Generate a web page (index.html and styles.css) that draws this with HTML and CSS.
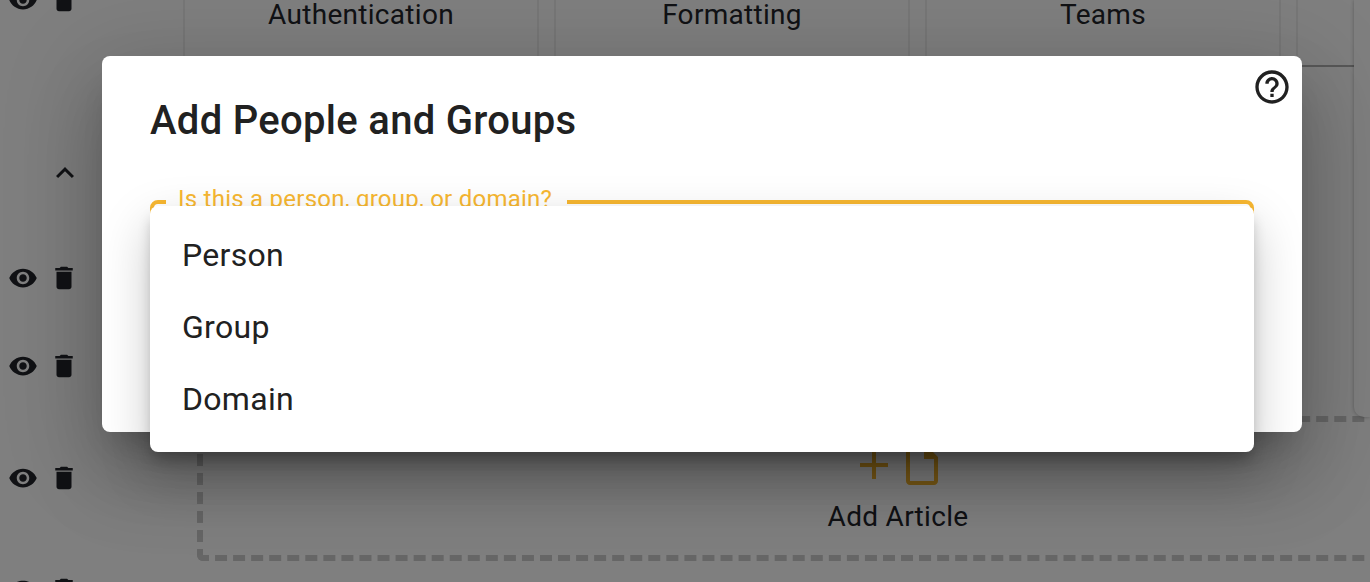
FILE: index.html
```html
<!DOCTYPE html>
<html lang="en">
<head>
<meta charset="utf-8">
<title>Add People and Groups</title>
<link rel="stylesheet" href="styles.css">
</head>
<body>
<div class="page">
  <aside class="rail">
    <div class="actions a0">
      <svg class="icon" viewBox="0 0 24 24"><path d="M12 4.5C7 4.5 2.73 7.61 1 12c1.73 4.39 6 7.5 11 7.5s9.27-3.11 11-7.5c-1.73-4.39-6-7.5-11-7.5zM12 17c-2.76 0-5-2.24-5-5s2.24-5 5-5 5 2.24 5 5-2.24 5-5 5zm0-8c-1.66 0-3 1.34-3 3s1.34 3 3 3 3-1.34 3-3-1.34-3-3-3z"/></svg>
      <svg class="icon" viewBox="0 0 24 24"><path d="M6 19c0 1.1.9 2 2 2h8c1.1 0 2-.9 2-2V7H6v12zM19 4h-3.5l-1-1h-5l-1 1H5v2h14V4z"/></svg>
    </div>
    <div class="chevron">
      <svg class="icon chevron-icon" viewBox="0 0 24 24"><path d="M12 8l-6 6 1.41 1.41L12 10.83l4.59 4.58L18 14z"/></svg>
    </div>
    <div class="actions a1">
      <svg class="icon" viewBox="0 0 24 24"><path d="M12 4.5C7 4.5 2.73 7.61 1 12c1.73 4.39 6 7.5 11 7.5s9.27-3.11 11-7.5c-1.73-4.39-6-7.5-11-7.5zM12 17c-2.76 0-5-2.24-5-5s2.24-5 5-5 5 2.24 5 5-2.24 5-5 5zm0-8c-1.66 0-3 1.34-3 3s1.34 3 3 3 3-1.34 3-3-1.34-3-3-3z"/></svg>
      <svg class="icon" viewBox="0 0 24 24"><path d="M6 19c0 1.1.9 2 2 2h8c1.1 0 2-.9 2-2V7H6v12zM19 4h-3.5l-1-1h-5l-1 1H5v2h14V4z"/></svg>
    </div>
    <div class="actions a2">
      <svg class="icon" viewBox="0 0 24 24"><path d="M12 4.5C7 4.5 2.73 7.61 1 12c1.73 4.39 6 7.5 11 7.5s9.27-3.11 11-7.5c-1.73-4.39-6-7.5-11-7.5zM12 17c-2.76 0-5-2.24-5-5s2.24-5 5-5 5 2.24 5 5-2.24 5-5 5zm0-8c-1.66 0-3 1.34-3 3s1.34 3 3 3 3-1.34 3-3-1.34-3-3-3z"/></svg>
      <svg class="icon" viewBox="0 0 24 24"><path d="M6 19c0 1.1.9 2 2 2h8c1.1 0 2-.9 2-2V7H6v12zM19 4h-3.5l-1-1h-5l-1 1H5v2h14V4z"/></svg>
    </div>
    <div class="actions a3">
      <svg class="icon" viewBox="0 0 24 24"><path d="M12 4.5C7 4.5 2.73 7.61 1 12c1.73 4.39 6 7.5 11 7.5s9.27-3.11 11-7.5c-1.73-4.39-6-7.5-11-7.5zM12 17c-2.76 0-5-2.24-5-5s2.24-5 5-5 5 2.24 5 5-2.24 5-5 5zm0-8c-1.66 0-3 1.34-3 3s1.34 3 3 3 3-1.34 3-3-1.34-3-3-3z"/></svg>
      <svg class="icon" viewBox="0 0 24 24"><path d="M6 19c0 1.1.9 2 2 2h8c1.1 0 2-.9 2-2V7H6v12zM19 4h-3.5l-1-1h-5l-1 1H5v2h14V4z"/></svg>
    </div>
    <div class="actions a4">
      <svg class="icon" viewBox="0 0 24 24"><path d="M12 4.5C7 4.5 2.73 7.61 1 12c1.73 4.39 6 7.5 11 7.5s9.27-3.11 11-7.5c-1.73-4.39-6-7.5-11-7.5zM12 17c-2.76 0-5-2.24-5-5s2.24-5 5-5 5 2.24 5 5-2.24 5-5 5zm0-8c-1.66 0-3 1.34-3 3s1.34 3 3 3 3-1.34 3-3-1.34-3-3-3z"/></svg>
      <svg class="icon" viewBox="0 0 24 24"><path d="M6 19c0 1.1.9 2 2 2h8c1.1 0 2-.9 2-2V7H6v12zM19 4h-3.5l-1-1h-5l-1 1H5v2h14V4z"/></svg>
    </div>
  </aside>
  <main class="main">
    <div class="tiles">
      <div class="tile">Authentication</div>
      <div class="tile">Formatting</div>
      <div class="tile">Teams</div>
      <div class="tile tile-last"></div>
    </div>
    <div class="add-box">
      <div class="add-icons">
        <svg class="add-icon" viewBox="0 0 24 24"><path d="M19 13h-6v6h-2v-6H5v-2h6V5h2v6h6v2z"/></svg>
        <svg class="add-icon" viewBox="0 0 24 24"><path d="M14 2H6c-1.100 0-2 .9-2 2v16c0 1.100.9 2 2 2h12c1.100 0 2-.9 2-2V8l-6-6zM6 20V4h7v5h5v11H6z"/></svg>
      </div>
      <div class="add-label">Add Article</div>
    </div>
  </main>
  <div class="side"></div>
</div>

<div class="overlay"></div>

<section class="dialog">
  <h1 class="title">Add People and Groups</h1>
  <div class="field">
    <span class="legend">Is this a person, group, or domain?</span>
  </div>
  <svg class="help" viewBox="0 0 24 24"><path d="M11 18h2v-2h-2v2zm1-16C6.480 2 2 6.480 2 12s4.480 10 10 10 10-4.480 10-10S17.520 2 12 2zm0 18c-4.410 0-8-3.590-8-8s3.590-8 8-8 8 3.590 8 8-3.590 8-8 8zm0-14c-2.210 0-4 1.790-4 4h2c0-1.100.9-2 2-2s2 .9 2 2c0 2-3 1.750-3 5h2c0-2.250 3-2.500 3-5 0-2.210-1.790-4-4-4z"/></svg>
</section>

<ul class="menu">
  <li class="menu-item">Person</li>
  <li class="menu-item">Group</li>
  <li class="menu-item">Domain</li>
</ul>
</body>
</html>
```

FILE: styles.css
```css
* { box-sizing: border-box; }

html, body {
  margin: 0;
  height: 582px;
  overflow: hidden;
  background: #fff;
  font-family: Roboto, "Liberation Sans", sans-serif;
  color: #212121;
}

.page {
  display: flex;
  height: 582px;
  overflow: hidden;
}

.rail {
  flex: 0 0 183px;
  display: flex;
  flex-direction: column;
  margin-top: -24px;
}

.icon {
  display: block;
  flex: none;
  width: 30px;
  height: 30px;
  fill: #23252b;
}

.actions {
  display: flex;
  flex: none;
  align-items: center;
  gap: 11px;
  padding-left: 8px;
  height: 30px;
}

.a0 { margin-top: 9px; }
.a1 { margin-top: 72px; }
.a2 { margin-top: 58px; }
.a3 { margin-top: 82px; }
.a4 { margin-top: 82px; }

.chevron {
  flex: none;
  margin-top: 140px;
  padding-left: 47px;
  height: 36px;
}

.chevron-icon {
  width: 36px;
  height: 36px;
}

.main {
  flex: 1 1 auto;
  min-width: 0;
  display: flex;
  flex-direction: column;
}

.tiles {
  display: flex;
  gap: 15px;
  height: 67px;
  flex: none;
}

.tile {
  flex: 0 0 356px;
  display: flex;
  justify-content: center;
  font-size: 28px;
  line-height: 29px;
  letter-spacing: 0.3px;
  color: #23252b;
  background: #fff;
  border-left: 2px solid #eeeeee;
  border-right: 2px solid #eeeeee;
  border-bottom: 2px solid #b0b0b0;
}

.tile-last {
  flex-basis: 120px;
  border-right: 0;
}

.add-box {
  flex: none;
  width: 1402px;
  height: 145px;
  margin: 349px 0 0 14px;
  border: 6px dashed #cccccc;
  border-radius: 6px;
  display: flex;
  flex-direction: column;
  align-items: center;
}

.add-icons {
  display: flex;
  margin-top: 19px;
  color: #f5b52e;
}

.add-icon {
  display: block;
  width: 48px;
  height: 48px;
  fill: currentColor;
}

.add-label {
  margin-top: 12px;
  font-size: 28px;
  line-height: 32px;
  letter-spacing: 0.3px;
  color: #23252b;
}

.side {
  flex: 0 0 16px;
  height: 417px;
  background: #fff;
  border-bottom-left-radius: 10px;
  box-shadow: 0 0 4px rgba(0, 0, 0, 0.3);
}

.overlay {
  position: absolute;
  inset: 0;
  background: rgba(0, 0, 0, 0.5);
}

.dialog {
  position: absolute;
  left: 102px;
  top: 56px;
  width: 1200px;
  height: 376px;
  padding: 41px 48px 0;
  background: #fff;
  border-radius: 8px;
  box-shadow: 0 22px 30px -14px rgba(0, 0, 0, 0.2), 0 48px 76px 6px rgba(0, 0, 0, 0.14), 0 18px 92px 16px rgba(0, 0, 0, 0.14);
}

.title {
  margin: 0;
  font-size: 40px;
  font-weight: 500;
  line-height: 48px;
  letter-spacing: 0.3px;
  color: #212121;
}

.field {
  position: relative;
  margin-top: 55px;
  height: 112px;
  border: 4px solid #f7b731;
  border-radius: 8px;
}

.legend {
  position: absolute;
  left: 12px;
  top: -23px;
  padding: 0 15px 0 12px;
  background: #fff;
  font-size: 24px;
  line-height: 36px;
  letter-spacing: 0.25px;
  color: #f7b731;
  white-space: nowrap;
}

.help {
  position: absolute;
  right: 10px;
  top: 11px;
  width: 40px;
  height: 40px;
  fill: #212121;
}

.menu {
  position: absolute;
  left: 150px;
  top: 206px;
  width: 1104px;
  height: 246px;
  margin: 0;
  padding: 13px 0 17px;
  list-style: none;
  background: #fff;
  border-radius: 8px;
  box-shadow: 0 10px 14px -2px rgba(0, 0, 0, 0.22), 0 20px 50px 0 rgba(0, 0, 0, 0.22);
}

.menu-item {
  height: 72px;
  padding-left: 32px;
  display: flex;
  align-items: center;
  font-size: 32px;
  letter-spacing: 0.3px;
  color: #212121;
}
```
